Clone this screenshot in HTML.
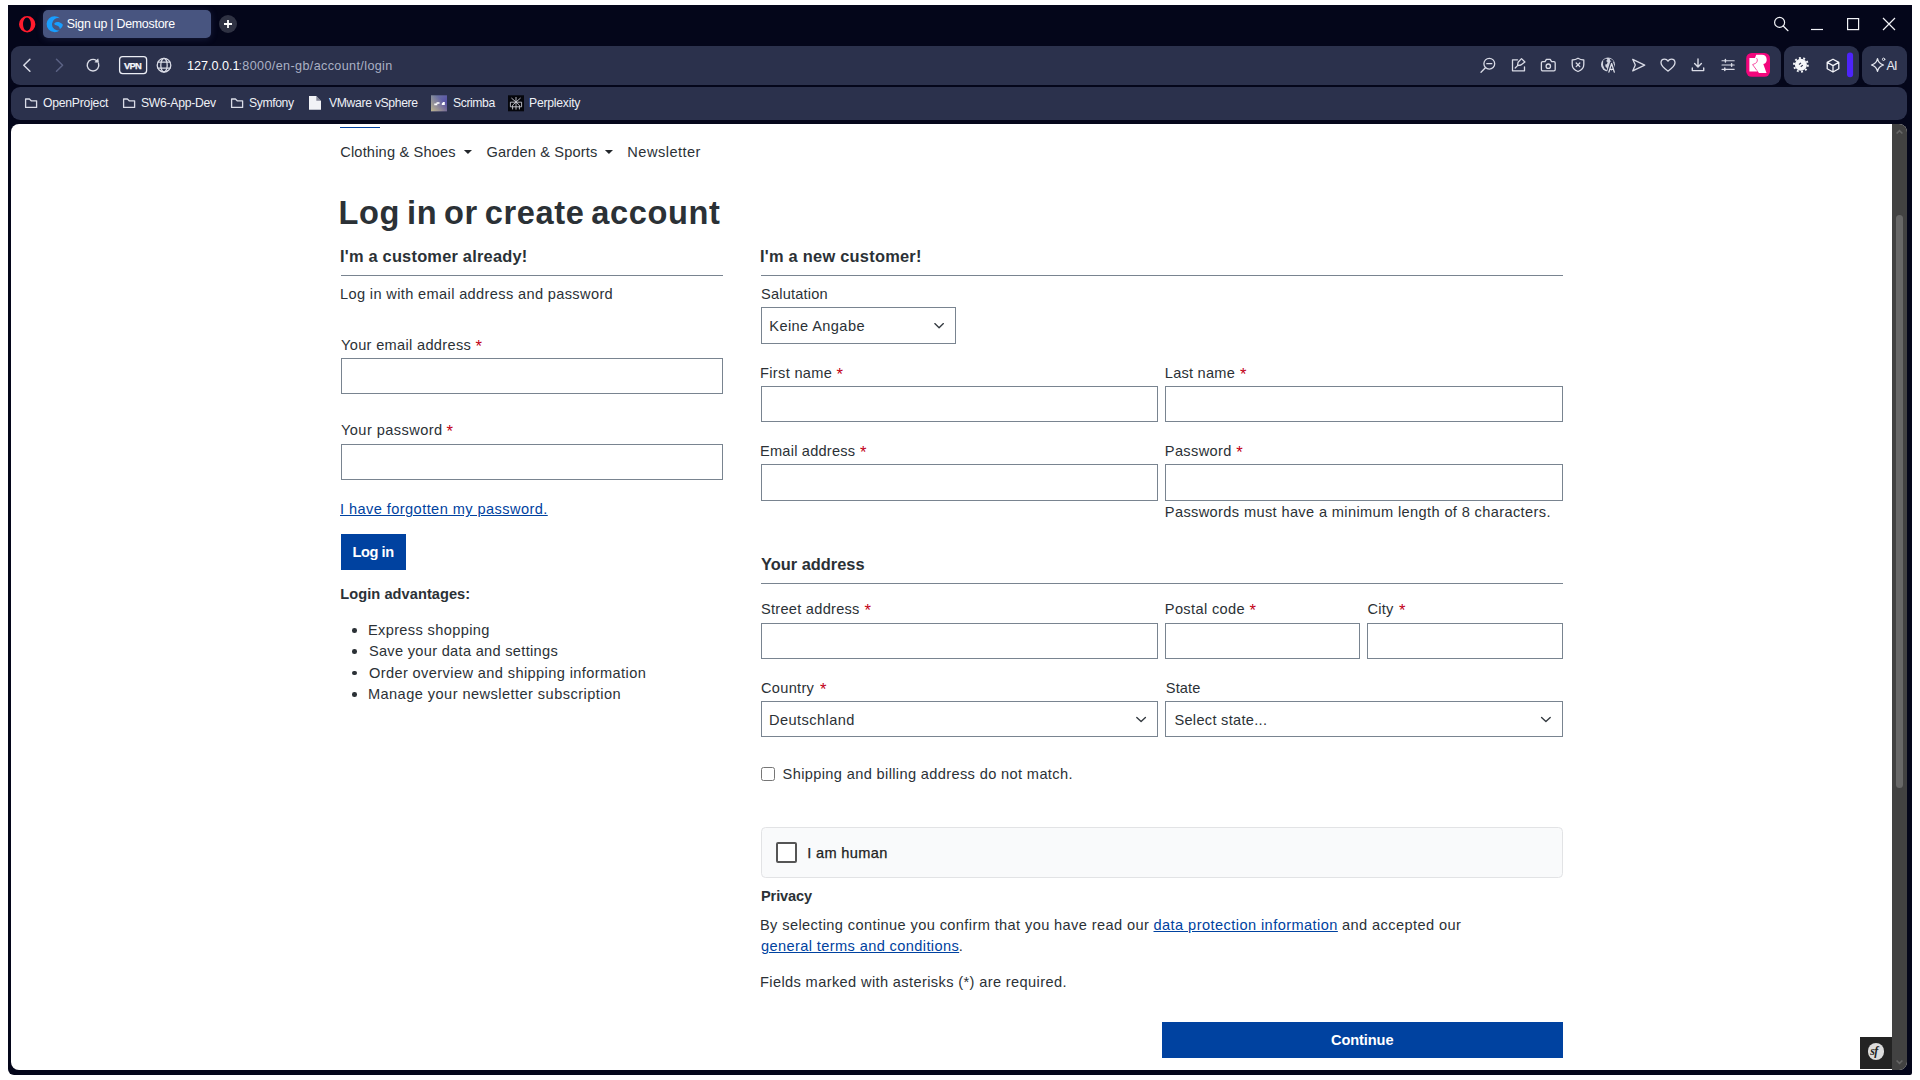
<!DOCTYPE html>
<html lang="en"><head><meta charset="utf-8"><title>Sign up | Demostore</title>
<style>
html,body{margin:0;padding:0;width:1920px;height:1080px;overflow:hidden;background:#ffffff;font-family:"Liberation Sans",sans-serif;}
.t{position:absolute;white-space:nowrap;line-height:1;font-family:"Liberation Sans",sans-serif;z-index:5;}
.a{position:absolute;box-sizing:border-box;}
.in{position:absolute;box-sizing:border-box;border:1px solid #798490;background:#fff;}
.hr{position:absolute;height:1px;background:#798490;}
.btn{position:absolute;background:#0042a0;}
.bul{position:absolute;width:4.6px;height:4.6px;border-radius:50%;background:#2b3136;}
svg{position:absolute;overflow:visible;}
.ic{fill:none;stroke:#d9dbe6;stroke-width:1.3;stroke-linecap:round;stroke-linejoin:round;}

</style></head>
<body>
<!-- window frame -->
<div class="a" style="left:8px;top:5px;width:1904px;height:1070px;background:#04061a;border-radius:0 0 2px 6px;"></div>

<!-- tab strip -->
<svg style="left:19px;top:15.800px" width="16.400" height="16.400" viewBox="0 0 16.400 16.400"><path fill-rule="evenodd" fill="#ff1b2d" d="M8.200 0a8.200 8.200 0 1 0 0 16.400a8.200 8.200 0 0 0 0-16.400zM8 1.600c2.200 0 3.950 2.950 3.950 6.600s-1.750 6.600-3.950 6.600s-3.950-2.950-3.950-6.600s1.750-6.600 3.950-6.600z"/></svg>
<div class="a" style="left:43px;top:10px;width:168px;height:28px;background:#485580;border-radius:5px;box-shadow:0 1px 7px rgba(70,80,140,.30);"></div>
<svg style="left:47px;top:16px" width="16" height="16" viewBox="0 0 16 16"><path fill="#189eff" d="M13 2.200A8 8 0 1 0 12.600 14.400A6.300 6.300 0 1 1 13 2.200z"/><path fill="#189eff" d="M7.700 7.100C9.200 5.500 12.600 5.700 15.400 8.100C16.100 9 15.700 10.500 14.700 11.500C13.600 12.700 12.800 13 12.600 12.600C12.900 10.600 10.600 9.500 8.300 9C7.200 8.700 7 7.800 7.700 7.100z"/></svg>
<div class="a" style="left:219px;top:15px;width:18px;height:18px;border-radius:50%;background:#2f3243;"></div>
<svg style="left:219px;top:15px" width="18" height="18" viewBox="0 0 18 18"><path d="M9 5v8M5 9h8" stroke="#fff" stroke-width="1.8" fill="none"/></svg>

<!-- window controls -->
<svg style="left:1770px;top:12px" width="130" height="24" viewBox="1770 12 130 24"><g fill="none" stroke="#f2f3f7" stroke-width="1.2"><circle cx="1779.6" cy="22.4" r="5"/><path d="M1783.200 26l4.800 4.700" stroke-linecap="round"/><path d="M1811 29.500h12"/><rect x="1847.600" y="18.600" width="11" height="11"/><path d="M1883 18l12 12M1895 18l-12 12"/></g></svg>

<!-- toolbar pills -->
<div class="a" style="left:11px;top:46px;width:1770px;height:39px;background:#2b314c;border-radius:9px;"></div>
<div class="a" style="left:1784px;top:46px;width:75px;height:39px;background:#2b314c;border-radius:9px;"></div>
<div class="a" style="left:1862px;top:46px;width:45px;height:39px;background:#2b314c;border-radius:9px;"></div>
<!-- bookmarks bar -->
<div class="a" style="left:11px;top:87px;width:1896px;height:33px;background:#2b314c;border-radius:9px;"></div>

<!-- nav icons -->
<svg style="left:0;top:0" width="1920" height="123" viewBox="0 0 1920 123">
 <g class="ic">
  <path d="M29.900 59.200l-6.100 6 6.100 6" stroke-width="1.5"/>
  <path d="M56.500 59.200l6.100 6-6.100 6" stroke="#5b6284" stroke-width="1.5"/>
  <path d="M98.520 63.410A5.800 5.800 0 1 1 96.400 60.500" stroke-width="1.4"/>
  <path d="M98.600 62.200L98 58.800 95.100 61.900z" fill="#d9dbe6" stroke-width=".6"/>
  <rect x="119.600" y="56.600" width="27" height="17" rx="3" stroke="#eceef5" stroke-width="1.3"/>
  <!-- globe -->
  <circle cx="164" cy="65.200" r="6.800"/>
  <ellipse cx="164" cy="65.200" rx="3.200" ry="6.800"/>
  <path d="M158 62.200h12M158 68.200h12"/>
  <!-- zoom out -->
  <circle cx="1489.300" cy="63.700" r="5.400"/>
  <path d="M1485.400 67.800l-4.400 4.400M1486.800 63.700h5"/>
  <!-- edit/pin -->
  <path d="M1517.500 59.800h-5v11h12v-4"/>
  <path d="M1521.500 58.600l3.400 3.400-4 3-3.400.6.600-3.400zM1517.600 65.600l-2.400 2.400"/>
  <!-- camera -->
  <path d="M1542.700 61.700h2.300l1.400-2.300h3.800l1.400 2.300h2.300a1.300 1.300 0 0 1 1.300 1.300v6.500a1.300 1.300 0 0 1-1.300 1.300h-11.200a1.300 1.300 0 0 1-1.300-1.300v-6.500a1.300 1.300 0 0 1 1.300-1.300z"/>
  <circle cx="1548.300" cy="66.200" r="2.200"/>
  <!-- shield x -->
  <path d="M1578 58.200c1.800 1.200 3.700 1.700 5.800 1.800v4.600c0 3.300-2.300 5.700-5.800 6.900-3.500-1.200-5.800-3.600-5.800-6.900v-4.600c2.100-.100 4-.6 5.800-1.800z"/>
  <path d="M1576.200 63l3.600 3.600M1579.800 63l-3.600 3.600"/>
  <!-- globe A -->
  <!-- send -->
  <path d="M1632.700 59.300l12 5.800-12 5.800 2.600-5.800z"/>
  <!-- heart -->
  <path d="M1668 71.200c-3.400-2.500-7-5.100-7-8.400 0-2.100 1.600-3.700 3.600-3.700 1.400 0 2.700.8 3.400 2 .7-1.200 2-2 3.400-2 2 0 3.600 1.600 3.600 3.700 0 3.300-3.600 5.900-7 8.400z"/>
  <!-- download -->
  <path d="M1698 59v7.800M1694.600 63.600l3.400 3.400 3.400-3.400M1692.300 68v2.600h11.400V68" stroke-width="1.400"/>
  <!-- sliders -->
  <path d="M1722 60.700h12.200M1722 65h12.200M1722 69.300h12.200" stroke-width="1.150"/><path d="M1725.400 59.500v2.400M1731.600 63.800v2.400M1724.800 68.100v2.400" stroke-width="1.500"/>
  <!-- cube -->
  <path d="M1833 59.200l5.800 3.200v6.400l-5.800 3.200-5.800-3.200v-6.400zM1827.200 62.400l5.800 3.200 5.800-3.200M1833 65.600v6.400" stroke="#f2f3f8" stroke-width="1.300"/>
  <!-- AI sparkle -->
  <path d="M1877.500 58.600c.7 3.600 2.200 5.200 6 6.400-3.800 1.200-5.300 2.800-6 6.400-.7-3.600-2.200-5.200-6-6.400 3.800-1.200 5.300-2.800 6-6.400z" stroke="#e6e8f0"/>
  <circle cx="1883.600" cy="59.300" r="1.200" stroke="#e6e8f0" stroke-width="1"/>
 </g>
<!-- globeA filled -->
 <circle cx="1608" cy="64.600" r="7" fill="#cfd2de"/>
 <path fill="#2b314c" d="M1603.200 60.200l2.600-1.600 1.600.6-1.200 1.800 1.400 1.400-.8 1.800-1.600.4.400 2.200 1.600 1.400-.6 2-2.200-1.800-1.400-3.400zM1609.600 58.600l2.800 1.200 1.400 2-2 .2-1.400-1.200z"/>
 <path d="M1608.600 72.400l3-9.400 3 9.400" fill="none" stroke="#2b314c" stroke-width="3.400" stroke-linejoin="round"/>
 <path d="M1608.900 72.100l2.700-8.600 2.700 8.600M1610 69.400h3.200" fill="none" stroke="#dfe1ea" stroke-width="1.300" stroke-linecap="round" stroke-linejoin="round"/>
 <!-- pink R -->
 <rect x="1746.200" y="53" width="23.800" height="23.800" rx="5.500" fill="#f2067c"/>
 <path fill="#fff" d="M1756.200 54.800h5.800a4.750 4.750 0 0 1 1.300 9.300l3.200 9h-7.600l-1.500-2.600v1h-8v-13.500h5.600z"/>
 <path fill="none" stroke="#f2067c" stroke-width=".7" d="M1756.600 58.200c1.400 1.600.8 4.200-1.200 5.200l-2.800 1.200 4.400 6"/>
 <!-- gear/bug -->
 <circle cx="1800.900" cy="64.800" r="6" fill="#f6f7fa"/>
 <circle cx="1800.900" cy="64.800" r="6.900" fill="none" stroke="#f6f7fa" stroke-width="2" stroke-dasharray="1.900 2.435"/>
 <g transform="rotate(-38 1800.900 64.800)" fill="#2b314c"><rect x="1799.600" y="62.800" width="2.600" height="1.100"/><rect x="1799.600" y="65.700" width="2.600" height="1.100"/></g>
 <!-- purple bar -->
 <rect x="1847" y="52.400" width="6.100" height="24.800" rx="3" fill="#4d24fb"/>

 <!-- bookmark folder icons -->
 <g class="ic" stroke="#eef0f6" stroke-width="1.300">
  <path id="fold" d="M25.600 99v8.400h11V100.800h-5.400l-1.800-1.800z"/>
  <path d="M123.600 99v8.400h11V100.800h-5.400l-1.800-1.800z"/>
  <path d="M231.600 99v8.400h11V100.800h-5.400l-1.800-1.800z"/>
 </g>
 <path fill="#f1f2f6" d="M309 96h7.300l4.700 4.700v9.100H309z"/>
 <path fill="#2b314c" d="M316.300 96v4.700h4.700z" opacity=".55"/>
 <!-- scrimba -->
 <defs><linearGradient id="scg" x1="0" y1="0" x2="1" y2="1"><stop offset="0" stop-color="#74819f"/><stop offset=".55" stop-color="#5d5aa6"/><stop offset="1" stop-color="#4b3f9c"/></linearGradient>
 <linearGradient id="scg2" x1="0" y1="1" x2=".6" y2=".2"><stop offset="0" stop-color="#c9c08a" stop-opacity=".9"/><stop offset="1" stop-color="#c9c08a" stop-opacity="0"/></linearGradient></defs>
 <rect x="431" y="95.300" width="16" height="16" fill="url(#scg)"/>
 <rect x="431" y="95.300" width="16" height="16" fill="url(#scg2)"/>
 <path fill="#fff" d="M434.300 103.600h2.200v-1.400h3v1.600h-2.200v1.400h-3zM441.800 103.400l1.400-1.400h1.600v3h-3z"/>
 <!-- perplexity -->
 <rect x="508" y="95.300" width="16" height="16" fill="#05060c"/>
 <g fill="none" stroke="#c9c9d2" stroke-width=".9"><path d="M516 97v12.600M511.400 98l4.600 4 4.600-4M510.400 102.200h11.200v4.600h-11.200zM512.600 109.400v-4.200l3.400-3.200 3.400 3.200v4.200"/></g>
</svg>

<!-- page -->
<div class="a" style="left:11px;top:123.600px;width:1896px;height:946.400px;background:#fff;border-radius:8px;overflow:hidden;">
  <div class="a" style="left:1881px;top:0;width:15px;height:947px;background:#424242;"></div>
  <div class="a" style="left:1885px;top:91px;width:7px;height:573px;background:#686868;border-radius:3.500px;"></div>
  <svg style="left:1881px;top:0" width="15" height="947" viewBox="0 0 15 947"><path d="M4.600 9.500l2.900-2.900 2.900 2.900M4.600 936.500l2.900 2.900 2.900-2.900" fill="none" stroke="#666" stroke-width="1.600"/></svg>
  <div class="a" style="left:1849px;top:913.500px;width:32px;height:31.700px;background:#232323;"></div>
  <div class="a" style="left:1856.600px;top:919.800px;width:16.600px;height:16.600px;border-radius:50%;background:#dcdcdc;"></div>
</div>
<span class="t" style="left:1870.300px;top:1045px;font-family:'Liberation Serif',serif;font-style:italic;font-weight:700;font-size:12px;color:#222;letter-spacing:-.6px;">sf</span>

<!-- nav underline + carets -->
<div class="a" style="left:340px;top:126.800px;width:40px;height:1.200px;background:#0042a0;"></div>
<svg style="left:0;top:140px" width="700" height="24" viewBox="0 140 700 24"><path fill="#23272b" d="M463.900 150h8.100l-4.050 3.900zM604.900 150h8.100l-4.050 3.900z"/></svg>

<!-- left column -->
<div class="hr" style="left:341px;top:275px;width:382px;"></div>
<div class="in" style="left:341px;top:358px;width:382px;height:36px;"></div>
<div class="in" style="left:341px;top:444px;width:382px;height:36px;"></div>
<div class="btn" style="left:341px;top:534px;width:65px;height:36px;"></div>
<div class="bul" style="left:352.100px;top:628.200px;"></div>
<div class="bul" style="left:352.100px;top:649.400px;"></div>
<div class="bul" style="left:352.100px;top:670.700px;"></div>
<div class="bul" style="left:352.100px;top:692px;"></div>

<!-- right column -->
<div class="hr" style="left:761px;top:275px;width:802px;"></div>
<div class="in" style="left:761px;top:307.400px;width:195px;height:36.400px;"></div>
<div class="in" style="left:761px;top:386px;width:397px;height:36px;"></div>
<div class="in" style="left:1165px;top:386px;width:398px;height:36px;"></div>
<div class="in" style="left:761px;top:464.200px;width:397px;height:36.400px;"></div>
<div class="in" style="left:1165px;top:464.200px;width:398px;height:36.400px;"></div>
<div class="hr" style="left:761px;top:583px;width:802px;"></div>
<div class="in" style="left:761px;top:623px;width:397px;height:36px;"></div>
<div class="in" style="left:1165px;top:623px;width:195px;height:36px;"></div>
<div class="in" style="left:1367px;top:623px;width:196px;height:36px;"></div>
<div class="in" style="left:761px;top:701.300px;width:397px;height:35.700px;"></div>
<div class="in" style="left:1165px;top:701.300px;width:398px;height:35.700px;"></div>
<svg style="left:0;top:300px" width="1600" height="440" viewBox="0 300 1600 440"><g fill="none" stroke="#343a40" stroke-width="1.350" stroke-linecap="round" stroke-linejoin="round"><path d="M934.800 323.600l4.300 4.200 4.300-4.200M1136.800 717.400l4.300 4.200 4.300-4.200M1541.600 717.400l4.300 4.200 4.300-4.200"/></g></svg>
<div class="a" style="left:761.200px;top:767px;width:13.600px;height:13.600px;border:1px solid #767676;border-radius:2.500px;background:#fff;"></div>
<div class="a" style="left:761px;top:827px;width:802px;height:50.500px;background:#f9fafb;border:1px solid #e2e3e5;border-radius:4.500px;"></div>
<div class="a" style="left:775.600px;top:842px;width:21.400px;height:21px;border:2px solid #555;border-radius:2px;background:#fff;"></div>
<div class="btn" style="left:1162px;top:1022px;width:401px;height:36px;"></div>

<!-- text -->
<span id="t0" class="t" style="left:340.20px;top:145.20px;font-size:14.60px;font-weight:400;color:#2b3136;letter-spacing:0.181px;">Clothing &amp; Shoes</span>
<span id="t1" class="t" style="left:486.40px;top:145.20px;font-size:14.60px;font-weight:400;color:#2b3136;letter-spacing:0.157px;">Garden &amp; Sports</span>
<span id="t2" class="t" style="left:627.30px;top:145.20px;font-size:14.60px;font-weight:400;color:#2b3136;letter-spacing:0.469px;">Newsletter</span>
<span id="t3" class="t" style="left:338.60px;top:197.20px;font-size:32.60px;font-weight:700;color:#2b3136;letter-spacing:0.613px;word-spacing:-2.8px;">Log in or create account</span>
<span id="t4" class="t" style="left:340.00px;top:248.20px;font-size:16.40px;font-weight:700;color:#2b3136;letter-spacing:0.218px;">I'm a customer already!</span>
<span id="t5" class="t" style="left:340.00px;top:287.20px;font-size:14.60px;font-weight:400;color:#2b3136;letter-spacing:0.355px;">Log in with email address and password</span>
<span id="t6" class="t" style="left:341.00px;top:338.20px;font-size:14.60px;font-weight:400;color:#2b3136;letter-spacing:0.318px;">Your email address</span>
<span id="t7" class="t" style="left:475.49px;top:339.20px;font-size:16.60px;font-weight:400;color:#c20017;letter-spacing:0.000px;">*</span>
<span id="t8" class="t" style="left:341.00px;top:423.20px;font-size:14.60px;font-weight:400;color:#2b3136;letter-spacing:0.426px;">Your password</span>
<span id="t9" class="t" style="left:446.49px;top:424.20px;font-size:16.60px;font-weight:400;color:#c20017;letter-spacing:0.000px;">*</span>
<span id="t10" class="t" style="left:340.00px;top:502.20px;font-size:14.60px;font-weight:400;color:#0042a0;letter-spacing:0.423px;text-decoration:underline;text-underline-offset:1px;">I have forgotten my password.</span>
<span id="t11" class="t" style="left:352.50px;top:545.20px;font-size:14.60px;font-weight:700;color:#fff;letter-spacing:-0.433px;">Log in</span>
<span id="t12" class="t" style="left:340.30px;top:587.20px;font-size:14.60px;font-weight:700;color:#2b3136;letter-spacing:0.058px;">Login advantages:</span>
<span id="t13" class="t" style="left:367.90px;top:623.20px;font-size:14.60px;font-weight:400;color:#2b3136;letter-spacing:0.367px;">Express shopping</span>
<span id="t14" class="t" style="left:368.90px;top:644.20px;font-size:14.60px;font-weight:400;color:#2b3136;letter-spacing:0.303px;">Save your data and settings</span>
<span id="t15" class="t" style="left:368.90px;top:666.20px;font-size:14.60px;font-weight:400;color:#2b3136;letter-spacing:0.392px;">Order overview and shipping information</span>
<span id="t16" class="t" style="left:367.90px;top:687.20px;font-size:14.60px;font-weight:400;color:#2b3136;letter-spacing:0.442px;">Manage your newsletter subscription</span>
<span id="t17" class="t" style="left:760.00px;top:248.20px;font-size:16.40px;font-weight:700;color:#2b3136;letter-spacing:0.252px;">I'm a new customer!</span>
<span id="t18" class="t" style="left:761.00px;top:287.20px;font-size:14.60px;font-weight:400;color:#2b3136;letter-spacing:0.188px;">Salutation</span>
<span id="t19" class="t" style="left:769.30px;top:319.20px;font-size:14.60px;font-weight:400;color:#2b3136;letter-spacing:0.393px;">Keine Angabe</span>
<span id="t20" class="t" style="left:760.00px;top:366.20px;font-size:14.60px;font-weight:400;color:#2b3136;letter-spacing:0.331px;">First name</span>
<span id="t21" class="t" style="left:836.49px;top:367.20px;font-size:16.60px;font-weight:400;color:#c20017;letter-spacing:0.000px;">*</span>
<span id="t22" class="t" style="left:1164.80px;top:366.20px;font-size:14.60px;font-weight:400;color:#2b3136;letter-spacing:0.233px;">Last name</span>
<span id="t23" class="t" style="left:1239.99px;top:367.20px;font-size:16.60px;font-weight:400;color:#c20017;letter-spacing:0.000px;">*</span>
<span id="t24" class="t" style="left:760.00px;top:444.20px;font-size:14.60px;font-weight:400;color:#2b3136;letter-spacing:0.219px;">Email address</span>
<span id="t25" class="t" style="left:859.99px;top:445.20px;font-size:16.60px;font-weight:400;color:#c20017;letter-spacing:0.000px;">*</span>
<span id="t26" class="t" style="left:1164.80px;top:444.20px;font-size:14.60px;font-weight:400;color:#2b3136;letter-spacing:0.363px;">Password</span>
<span id="t27" class="t" style="left:1236.29px;top:445.20px;font-size:16.60px;font-weight:400;color:#c20017;letter-spacing:0.000px;">*</span>
<span id="t28" class="t" style="left:1164.80px;top:505.20px;font-size:14.60px;font-weight:400;color:#2b3136;letter-spacing:0.366px;">Passwords must have a minimum length of 8 characters.</span>
<span id="t29" class="t" style="left:761.00px;top:556.20px;font-size:16.40px;font-weight:700;color:#2b3136;letter-spacing:-0.003px;">Your address</span>
<span id="t30" class="t" style="left:761.00px;top:602.20px;font-size:14.60px;font-weight:400;color:#2b3136;letter-spacing:0.267px;">Street address</span>
<span id="t31" class="t" style="left:864.49px;top:603.20px;font-size:16.60px;font-weight:400;color:#c20017;letter-spacing:0.000px;">*</span>
<span id="t32" class="t" style="left:1164.80px;top:602.20px;font-size:14.60px;font-weight:400;color:#2b3136;letter-spacing:0.355px;">Postal code</span>
<span id="t33" class="t" style="left:1249.49px;top:603.20px;font-size:16.60px;font-weight:400;color:#c20017;letter-spacing:0.000px;">*</span>
<span id="t34" class="t" style="left:1367.60px;top:602.20px;font-size:14.60px;font-weight:400;color:#2b3136;letter-spacing:0.185px;">City</span>
<span id="t35" class="t" style="left:1398.99px;top:603.20px;font-size:16.60px;font-weight:400;color:#c20017;letter-spacing:0.000px;">*</span>
<span id="t36" class="t" style="left:761.00px;top:681.20px;font-size:14.60px;font-weight:400;color:#2b3136;letter-spacing:0.298px;">Country</span>
<span id="t37" class="t" style="left:819.99px;top:682.20px;font-size:16.60px;font-weight:400;color:#c20017;letter-spacing:0.000px;">*</span>
<span id="t38" class="t" style="left:1165.80px;top:681.20px;font-size:14.60px;font-weight:400;color:#2b3136;letter-spacing:0.110px;">State</span>
<span id="t39" class="t" style="left:769.10px;top:713.20px;font-size:14.60px;font-weight:400;color:#2b3136;letter-spacing:0.418px;">Deutschland</span>
<span id="t40" class="t" style="left:1174.40px;top:713.20px;font-size:14.60px;font-weight:400;color:#2b3136;letter-spacing:0.302px;">Select state...</span>
<span id="t41" class="t" style="left:782.60px;top:767.20px;font-size:14.60px;font-weight:400;color:#2b3136;letter-spacing:0.362px;">Shipping and billing address do not match.</span>
<span id="t42" class="t" style="left:807.20px;top:846.20px;font-size:14.60px;font-weight:400;color:#222;letter-spacing:0.339px;-webkit-text-stroke:0.25px #222;">I am human</span>
<span id="t43" class="t" style="left:761.00px;top:889.20px;font-size:14.60px;font-weight:700;color:#2b3136;letter-spacing:-0.137px;">Privacy</span>
<span id="t44" class="t" style="left:760.00px;top:918.20px;font-size:14.60px;font-weight:400;color:#2b3136;letter-spacing:0.388px;">By selecting continue you confirm that you have read our</span>
<span id="t45" class="t" style="left:1153.50px;top:918.20px;font-size:14.60px;font-weight:400;color:#0042a0;letter-spacing:0.428px;text-decoration:underline;text-underline-offset:1px;">data protection information</span>
<span id="t46" class="t" style="left:1342.00px;top:918.20px;font-size:14.60px;font-weight:400;color:#2b3136;letter-spacing:0.405px;">and accepted our</span>
<span id="t47" class="t" style="left:761.00px;top:939.20px;font-size:14.60px;font-weight:400;color:#0042a0;letter-spacing:0.385px;text-decoration:underline;text-underline-offset:1px;">general terms and conditions</span>
<span id="t48" class="t" style="left:958.75px;top:939.20px;font-size:14.60px;font-weight:400;color:#2b3136;letter-spacing:0.000px;">.</span>
<span id="t49" class="t" style="left:760.00px;top:975.20px;font-size:14.60px;font-weight:400;color:#2b3136;letter-spacing:0.376px;">Fields marked with asterisks (*) are required.</span>
<span id="t50" class="t" style="left:1331.00px;top:1033.20px;font-size:14.60px;font-weight:700;color:#fff;letter-spacing:-0.103px;">Continue</span>
<span id="t51" class="t" style="left:66.80px;top:18.20px;font-size:12.40px;font-weight:400;color:#ffffff;letter-spacing:-0.247px;">Sign up | Demostore</span>
<span id="t52" class="t" style="left:187.00px;top:60.20px;font-size:12.60px;font-weight:400;color:#ffffff;letter-spacing:-0.003px;">127.0.0.1</span>
<span id="t53" class="t" style="left:238.50px;top:60.20px;font-size:12.60px;font-weight:400;color:#aab0c4;letter-spacing:0.369px;">:8000/en-gb/account/login</span>
<span id="t54" class="t" style="left:43.00px;top:97.20px;font-size:12.20px;font-weight:400;color:#eef0f6;letter-spacing:-0.236px;">OpenProject</span>
<span id="t55" class="t" style="left:141.00px;top:97.20px;font-size:12.20px;font-weight:400;color:#eef0f6;letter-spacing:-0.280px;">SW6-App-Dev</span>
<span id="t56" class="t" style="left:249.00px;top:97.20px;font-size:12.20px;font-weight:400;color:#eef0f6;letter-spacing:-0.388px;">Symfony</span>
<span id="t57" class="t" style="left:329.00px;top:97.20px;font-size:12.20px;font-weight:400;color:#eef0f6;letter-spacing:-0.339px;">VMware vSphere</span>
<span id="t58" class="t" style="left:453.00px;top:97.20px;font-size:12.20px;font-weight:400;color:#eef0f6;letter-spacing:-0.404px;">Scrimba</span>
<span id="t59" class="t" style="left:529.00px;top:97.20px;font-size:12.20px;font-weight:400;color:#eef0f6;letter-spacing:-0.236px;">Perplexity</span>
<span id="t60" class="t" style="left:124.10px;top:61.20px;font-size:9.40px;font-weight:700;color:#f6f7fb;letter-spacing:-0.805px;-webkit-text-stroke:0.25px #f6f7fb;">VPN</span>
<span id="t61" class="t" style="left:1886.60px;top:60.20px;font-size:12.60px;font-weight:400;color:#e9ebf2;letter-spacing:-1.007px;">AI</span>
</body></html>
